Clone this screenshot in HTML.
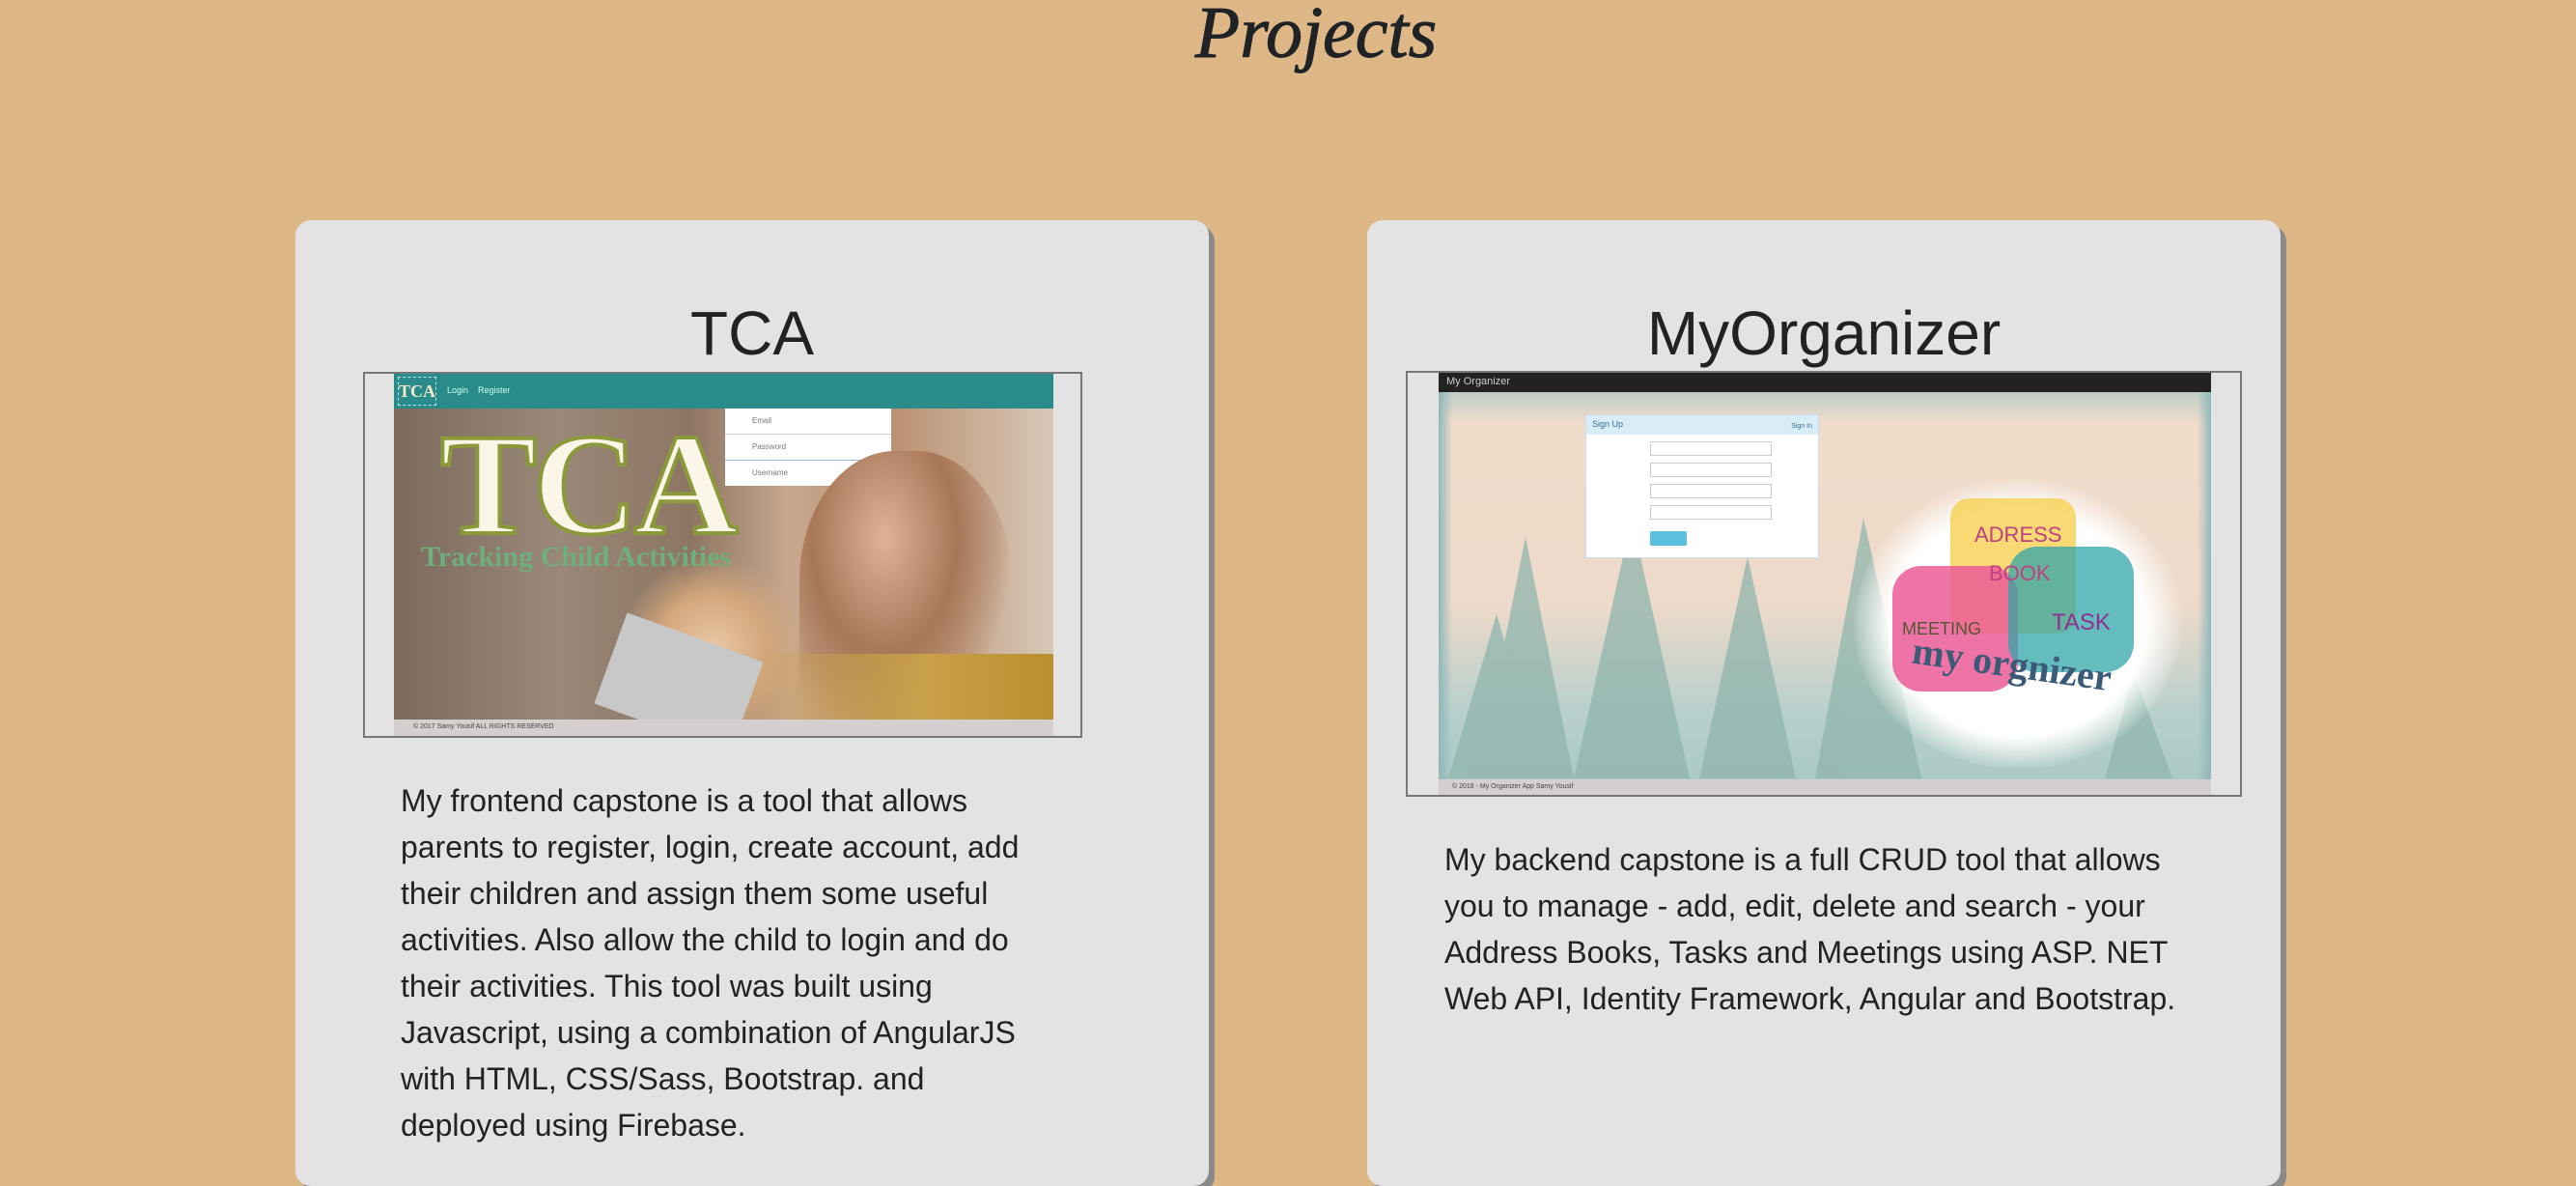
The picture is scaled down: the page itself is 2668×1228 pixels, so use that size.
<!DOCTYPE html>
<html><head><meta charset="utf-8"><style>
*{margin:0;padding:0;box-sizing:border-box}
body{width:2668px;height:1186px;overflow:hidden;background:#deb787;font-family:"Liberation Sans",sans-serif;position:relative;color:#222}
.abs{position:absolute}
h1{position:absolute;left:0;width:2726px;text-align:center;top:-4px;font:italic normal 76px "Liberation Serif",serif;color:#1f2326;line-height:1;-webkit-text-stroke:1px #1f2326}
.card{position:absolute;top:228px;width:946px;height:1000px;background:#e3e3e3;border-radius:16px;box-shadow:6px 6px 0 #8a8a8a}
.title{position:absolute;left:0;width:100%;text-align:center;font-size:64px;line-height:1;top:85px;color:#222}
.txt{position:absolute;font-size:32px;line-height:48px;white-space:nowrap;color:#222}
.frame{position:absolute;border:2px solid #777;background:#e3e3e3}
</style></head><body>
<h1>Projects</h1>

<div class="card" style="left:306px">
<div class="title">TCA</div>
</div>
<div class="card" style="left:1416px">
<div class="title">MyOrganizer</div>
</div>

<!-- TCA image -->
<div class="frame" style="left:376px;top:385px;width:745px;height:379px">
 <div class="abs" style="left:30px;top:0;width:683px;height:375px;overflow:hidden;background:linear-gradient(90deg,#7b6a5c 0%,#9a8878 25%,#8d7563 45%,#c9a88f 60%,#b98f6f 75%,#d8c8b8 100%)">
  <div class="abs" style="left:0;top:0;width:683px;height:36px;background:#2a8c8a"></div>
  <div class="abs" style="left:4px;top:3px;width:40px;height:30px;border:1px dashed #cde;color:#f4e8c8;font:bold 18px 'Liberation Serif',serif;text-align:center;line-height:28px">TCA</div>
  <div class="abs" style="left:55px;top:12px;font-size:9px;color:#cfe">Login &nbsp;&nbsp; Register</div>
  <div class="abs" style="left:343px;top:36px;width:172px;height:80px;background:#fff;font-size:8px;color:#777">
   <div style="height:27px;border-bottom:1px solid #ccc;padding:8px 28px">Email</div>
   <div style="height:27px;border-bottom:1px solid #9bd;padding:8px 28px">Password</div>
   <div style="padding:8px 28px">Username</div>
  </div>
  <div class="abs" style="left:420px;top:80px;width:220px;height:300px;border-radius:45% 45% 10% 10%;background:radial-gradient(ellipse at 40% 30%,#e0b298 0%,#a77757 40%,rgba(100,70,50,0) 72%)"></div>
  <div class="abs" style="left:230px;top:190px;width:200px;height:190px;border-radius:50%;background:radial-gradient(circle,#eac8a8 0%,#d3a87d 40%,rgba(180,140,100,0) 70%)"></div>
  <div class="abs" style="left:360px;top:290px;width:323px;height:90px;background:linear-gradient(90deg,rgba(0,0,0,0),#c9a048 60%,#b8902f)"></div>
  <div class="abs" style="left:220px;top:270px;width:150px;height:100px;background:#c8c8c8;transform:rotate(20deg)"></div>
  <div class="abs" style="left:48px;top:40px;font:bold 150px 'Liberation Serif',serif;color:#fbf6e8;-webkit-text-stroke:4px #8a9a3a;letter-spacing:-4px;line-height:1">TCA</div>
  <div class="abs" style="left:28px;top:173px;font:bold 30px 'Liberation Serif',serif;color:#6fae7d;white-space:nowrap">Tracking Child Activities</div>
  <div class="abs" style="left:0;top:358px;width:683px;height:17px;background:#d5cfcf;font-size:7px;color:#444;padding:4px 20px">© 2017 Samy Yousif ALL RIGHTS RESERVED</div>
 </div>
</div>

<!-- MyOrganizer image -->
<div class="frame" style="left:1456px;top:384px;width:866px;height:441px">
 <div class="abs" style="left:32px;top:0;width:800px;height:437px;overflow:hidden;background:linear-gradient(180deg,#9fc4c4 0%,#f0dccb 12%,#eedaca 55%,#b8d0cc 80%,#a9c8c4 100%)">
  <div class="abs" style="left:0;top:0;width:800px;height:20px;background:#222;color:#ccc;font-size:11px;padding:3px 8px">My Organizer</div>
  <div class="abs" style="left:0;top:20px;width:14px;height:420px;background:linear-gradient(90deg,#8fb8b8,rgba(0,0,0,0))"></div>
  <div class="abs" style="right:0;top:20px;width:14px;height:420px;background:linear-gradient(270deg,#8fb8b8,rgba(0,0,0,0))"></div>
  <svg class="abs" style="left:0;top:150px" width="800" height="270"><g fill="#8fb5ad" opacity=".75">
   <polygon points="90,20 40,270 140,270"/><polygon points="200,0 140,270 260,270"/><polygon points="320,40 270,270 370,270"/><polygon points="440,0 390,270 500,270"/><polygon points="60,100 10,270 110,270"/><polygon points="720,160 690,270 760,270"/></g></svg>
  <div class="abs" style="left:152px;top:43px;width:242px;height:149px;background:#fff;border:1px solid #cde">
   <div style="height:20px;background:#d9edf7;color:#31708f;font-size:9px;padding:4px 6px">Sign Up<span style="float:right;font-size:7px;margin-top:4px">Sign In</span></div>
   <div class="abs" style="left:66px;top:27px;width:126px;height:15px;border:1px solid #ccc"></div>
   <div class="abs" style="left:66px;top:49px;width:126px;height:15px;border:1px solid #ccc"></div>
   <div class="abs" style="left:66px;top:71px;width:126px;height:15px;border:1px solid #ccc"></div>
   <div class="abs" style="left:66px;top:93px;width:126px;height:15px;border:1px solid #ccc"></div>
   <div class="abs" style="left:66px;top:120px;width:38px;height:15px;background:#5bc0de;border-radius:2px"></div>
  </div>
  <div class="abs" style="left:430px;top:110px;width:340px;height:300px;border-radius:50%;background:radial-gradient(ellipse,#fff 55%,rgba(255,255,255,0) 72%)"></div>
  <div class="abs" style="left:530px;top:130px;width:130px;height:140px;border-radius:20px;background:rgba(247,210,90,.85)"></div>
  <div class="abs" style="left:470px;top:200px;width:130px;height:130px;border-radius:30px;background:rgba(235,90,150,.85)"></div>
  <div class="abs" style="left:590px;top:180px;width:130px;height:130px;border-radius:30px;background:rgba(50,165,170,.75)"></div>
  <div class="abs" style="left:555px;top:155px;font-size:22px;color:#c04080">ADRESS</div>
  <div class="abs" style="left:570px;top:195px;font-size:22px;color:#c04080">BOOK</div>
  <div class="abs" style="left:480px;top:255px;font-size:18px;color:#553">MEETING</div>
  <div class="abs" style="left:635px;top:245px;font-size:24px;color:#903090">TASK</div>
  <div class="abs" style="left:490px;top:278px;font:bold 40px 'Liberation Serif',serif;color:#3a5a78;transform:rotate(8deg)">my orgnizer</div>
  <div class="abs" style="left:0;top:421px;width:800px;height:16px;background:#d5cfcf;font-size:7px;color:#444;padding:4px 14px">© 2018 - My Organizer App Samy Yousif</div>
 </div>
</div>

<div class="txt" style="left:415px;top:805px">My frontend capstone is a tool that allows<br>parents to register, login, create account, add<br>their children and assign them some useful<br>activities. Also allow the child to login and do<br>their activities. This tool was built using<br>Javascript, using a combination of AngularJS<br>with HTML, CSS/Sass, Bootstrap. and<br>deployed using Firebase.</div>

<div class="txt" style="left:1496px;top:866px">My backend capstone is a full CRUD tool that allows<br>you to manage - add, edit, delete and search - your<br>Address Books, Tasks and Meetings using ASP. NET<br>Web API, Identity Framework, Angular and Bootstrap.</div>
</body></html>
